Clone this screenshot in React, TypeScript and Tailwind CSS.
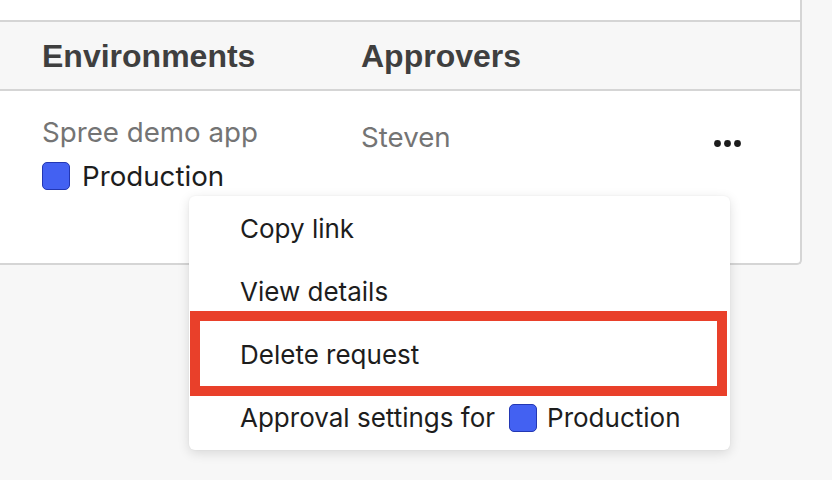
function EnvSquare() {
  return (
    <span className="inline-block w-[28px] h-[28px] rounded-[5px] bg-[#4361f2] border-[1.5px] border-[#2337b3] shrink-0" />
  );
}

function MoreDots() {
  return (
    <svg width="30" height="10" viewBox="0 0 30 10" className="block">
      <circle cx="4.5" cy="4.5" r="3.4" fill="#1c1c1c" />
      <circle cx="14.5" cy="4.5" r="3.4" fill="#1c1c1c" />
      <circle cx="24.5" cy="4.5" r="3.4" fill="#1c1c1c" />
    </svg>
  );
}

const menuItems = ["Copy link", "View details", "Delete request"];

export default function App() {
  return (
    <div className="relative w-[832px] h-[480px] overflow-hidden bg-[#f7f7f7] font-['Inter',sans-serif]">
      {/* table card */}
      <div className="w-[802px] bg-white border-r-2 border-b-2 border-[#d5d5d5] rounded-br-[5px]">
        <div className="h-[20px]" />
        <div className="h-[71px] flex items-center bg-[#f7f7f7] border-y-2 border-[#d5d5d5] pl-[42px] font-['Liberation_Sans',Arial,sans-serif] font-bold text-[32px] leading-[36px] text-[#3f3f3f]">
          <div className="w-[319px]">Environments</div>
          <div>Approvers</div>
        </div>
        <div className="h-[172px] flex items-start pl-[42px] pt-[19px] text-[27.7px] leading-[44px]">
          <div className="w-[319px]">
            <div className="text-[#747474]">Spree demo app</div>
            <div className="flex items-center gap-[12px] text-[#1d1d1d]">
              <EnvSquare />
              <span>Production</span>
            </div>
          </div>
          <div className="w-[352px] mt-[5px] text-[#747474]">Steven</div>
          <div className="mt-[29px]">
            <MoreDots />
          </div>
        </div>
      </div>

      {/* dropdown menu */}
      <div className="absolute left-[189px] top-[196px] w-[541px] h-[254px] py-[1px] bg-white rounded-[6px] shadow-[0_3px_12px_rgba(0,0,0,0.13),0_0_2px_rgba(0,0,0,0.06)] text-[26px] leading-[34px] text-[#1d1d1d]">
        {menuItems.map((label) => (
          <div key={label} className="h-[63px] flex items-center pl-[51px]">
            {label}
          </div>
        ))}
        <div className="h-[63px] flex items-center pl-[51px]">
          <span>Approval settings for</span>
          <span className="ml-[14px] mr-[10px] flex">
            <EnvSquare />
          </span>
          <span>Production</span>
        </div>
        {/* highlight around "Delete request" */}
        <div className="absolute left-[1px] top-[115px] w-[537px] h-[85px] border-[10px] border-[#e9402a]" />
      </div>
    </div>
  );
}
